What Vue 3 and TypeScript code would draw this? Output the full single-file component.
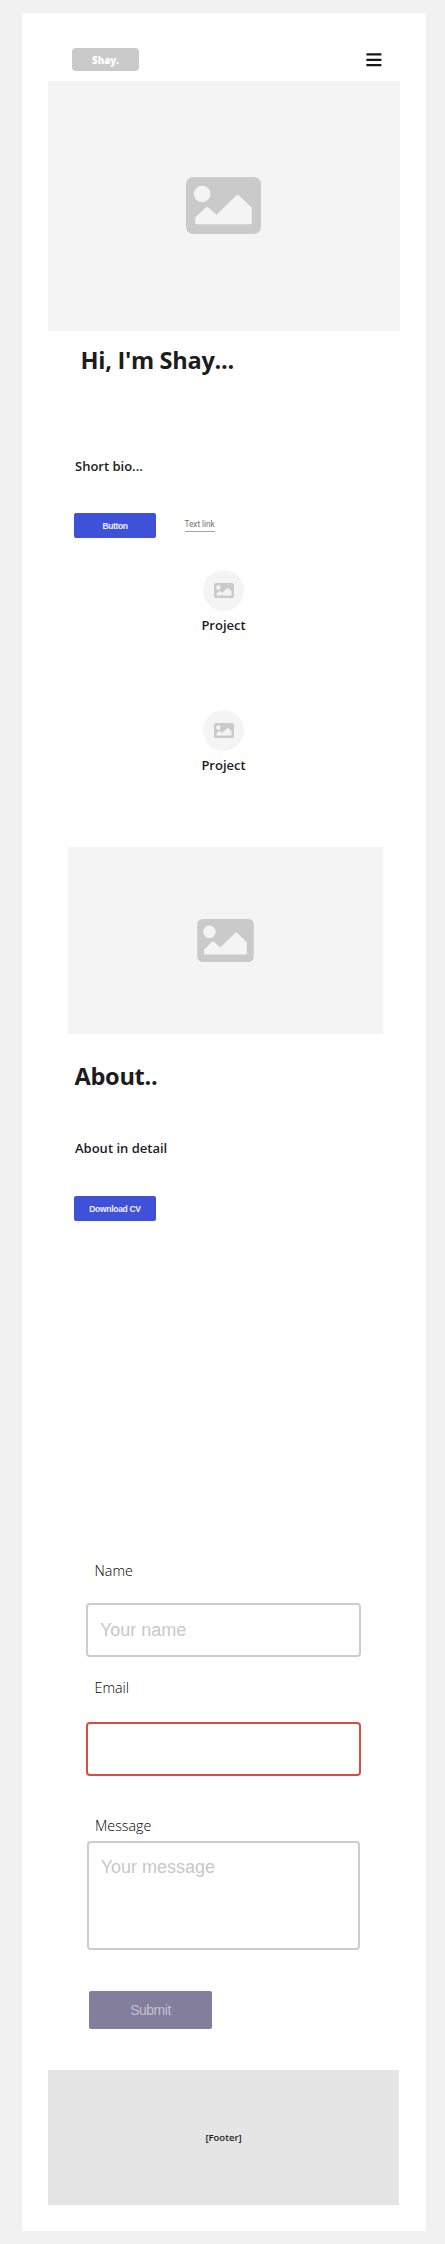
<script setup lang="ts">
import { h, ref, type FunctionalComponent } from 'vue'

const PictureIcon: FunctionalComponent = () =>
  h('svg', { viewBox: '0 0 75 57', 'aria-hidden': 'true' }, [
    h('rect', { width: 75, height: 57, rx: 7, fill: '#cacaca' }),
    h('circle', { cx: 16.2, cy: 17, r: 8.3, fill: '#f4f4f4' }),
    h('path', {
      d: 'M9.2 47.2V40.5L20 30.2Q21 29.2 22 30.2L30.5 37.8L50.5 18.3Q51.7 17.2 52.9 18.3L65.8 30.8V47.2Z',
      fill: '#f4f4f4',
    }),
  ])

const projects: string[] = ['Project', 'Project']
const name = ref('')
const email = ref('')
const message = ref('')
</script>

<template>
  <div class="canvas">
    <div class="page">
      <header class="topbar">
        <div class="logo">Shay.</div>
        <svg class="menu" viewBox="0 0 16 14">
          <path d="M0.4 1.4H15.4M0.4 6.9H15.4M0.4 12.2H15.4" stroke="#18181c" stroke-width="2.3" />
        </svg>
      </header>

      <div class="hero"><PictureIcon class="hero-icon" /></div>

      <section class="intro">
        <h1 class="title hello">Hi, I'm Shay...</h1>
        <p class="sub bio">Short bio...</p>
        <div class="actions">
          <button class="btn">Button</button>
          <a class="link">Text link</a>
        </div>
      </section>

      <section class="projects">
        <article v-for="(project, i) in projects" :key="i" class="project">
          <div class="avatar"><PictureIcon class="avatar-icon" /></div>
          <h2 class="sub project-name">{{ project }}</h2>
        </article>
      </section>

      <section class="about">
        <div class="about-image"><PictureIcon class="about-icon" /></div>
        <h1 class="title about-title">About..</h1>
        <p class="sub detail">About in detail</p>
        <button class="btn download">Download CV</button>
      </section>

      <form class="contact" @submit.prevent>
        <label class="label" for="name">Name</label>
        <input id="name" v-model="name" class="field" placeholder="Your name" />
        <label class="label email-label" for="email">Email</label>
        <input id="email" v-model="email" class="field invalid" />
        <label class="label message-label" for="message">Message</label>
        <textarea id="message" v-model="message" class="field area" placeholder="Your message"></textarea>
        <button class="submit">Submit</button>
      </form>

      <footer class="footer">[Footer]</footer>
    </div>
  </div>
</template>

<style>
html,
body {
  margin: 0;
  background: #f1f1f1;
}
</style>

<style scoped>
.canvas,
.canvas * {
  box-sizing: border-box;
}
.canvas {
  width: 445px;
  height: 2244px;
  padding: 13px 0 0 21.5px;
  background: #f1f1f1;
  font-family: 'Open Sans', 'Noto Sans', sans-serif;
  color: #1c1c1e;
}
.page {
  width: 404px;
  height: 2218px;
  padding: 0 26.5px;
  background: #fff;
}
h1,
h2,
p {
  margin: 0;
}
.topbar {
  display: flex;
  justify-content: space-between;
  height: 67.5px;
  padding: 35px 17px 0 24px;
}
.logo {
  width: 67px;
  height: 23px;
  border-radius: 4px;
  background: #cacaca;
  color: #fff;
  font-size: 9.7px;
  font-weight: 800;
  line-height: 25px;
  text-align: center;
}
.menu {
  width: 16px;
  height: 14px;
  margin-top: 5px;
}
.hero {
  display: flex;
  align-items: center;
  justify-content: center;
  width: 351.5px;
  height: 250px;
  background: #f4f4f4;
}
.hero-icon {
  width: 75px;
  height: 57px;
}
.title {
  font-size: 23.6px;
  font-weight: 700;
  line-height: 32px;
  letter-spacing: -0.3px;
  white-space: nowrap;
}
.sub {
  font-size: 13px;
  font-weight: 600;
  line-height: 18px;
  white-space: nowrap;
}
.intro {
  height: 239.5px;
  padding: 13.5px 0 0 26px;
}
.hello {
  padding-left: 6.5px;
}
.bio {
  margin: 81px 0 38px 1px;
}
.actions {
  display: flex;
  align-items: flex-start;
}
.btn {
  display: block;
  width: 82px;
  height: 25px;
  padding: 0;
  border: 0;
  border-radius: 2px;
  background: #3f51d8;
  color: #eef0ff;
  font: 700 8.5px/26px 'Liberation Sans', sans-serif;
  letter-spacing: -0.4px;
}
.link {
  height: 14px;
  margin: 5px 0 0 28.5px;
  border-bottom: 1px solid #a4a4a4;
  color: #707070;
  font: 8.2px/13px Roboto, sans-serif;
}
.project {
  display: flex;
  flex-direction: column;
  align-items: center;
  height: 140px;
}
.projects {
  height: 277px;
}
.avatar {
  display: flex;
  align-items: center;
  justify-content: center;
  width: 41px;
  height: 41px;
  border-radius: 50%;
  background: #f4f4f4;
}
.avatar-icon {
  width: 20px;
  height: 15.2px;
}
.project-name {
  margin-top: 5px;
}
.about {
  width: 315px;
  height: 714px;
  margin-left: 20px;
}
.about-image {
  display: flex;
  align-items: center;
  justify-content: center;
  height: 187px;
  background: #f4f4f4;
}
.about-icon {
  width: 57px;
  height: 43px;
}
.about-title {
  margin: 26px 0 47px 6.5px;
}
.detail {
  margin-left: 7px;
}
.download {
  margin: 39px 0 0 6px;
  letter-spacing: -0.3px;
}
.contact {
  display: flex;
  flex-direction: column;
  align-items: flex-start;
  height: 509px;
  padding-left: 38.5px;
}
.label {
  padding-left: 8px;
  color: #000;
  font-size: 14.3px;
  font-weight: 300;
  line-height: 20px;
}
.field {
  display: block;
  width: 274.5px;
  height: 54px;
  margin: 22px 0 0 -0.3px;
  padding: 0 11.7px;
  border: 2px solid #ccc;
  border-radius: 4px;
  outline: 0;
  background: #fff;
  font: 18px/22px 'Liberation Sans', sans-serif;
  resize: none;
}
.field::placeholder {
  color: #c8c8c8;
  opacity: 1;
}
.email-label {
  margin-top: 21px;
}
.field.invalid {
  margin-top: 24px;
  border-color: #dc4c3e;
}
.message-label {
  margin-top: 40px;
  padding-left: 8.5px;
}
.area {
  width: 273px;
  height: 108.5px;
  margin: 5px 0 0 0.5px;
  padding-top: 13px;
}
.submit {
  width: 123px;
  height: 38px;
  margin: 41.5px 0 0 2.5px;
  padding: 0;
  border: 0;
  border-radius: 2px;
  background: #827e9b;
  color: #c3c1d0;
  font: 14px/37px 'Liberation Sans', sans-serif;
  letter-spacing: -0.5px;
}
.footer {
  height: 135px;
  background: #e5e5e5;
  font-size: 9.5px;
  font-weight: 600;
  line-height: 135px;
  text-align: center;
}
</style>
